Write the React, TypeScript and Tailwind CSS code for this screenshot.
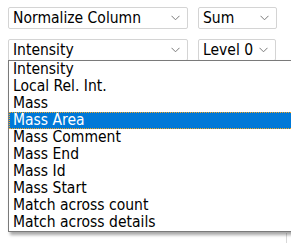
import React from "react";

const font = {
  fontFamily: '"DejaVu Sans Condensed", "DejaVu Sans", Verdana, sans-serif',
};

function Chevron() {
  return (
    <svg width="9" height="6" viewBox="0 0 9 6" className="shrink-0">
      <path d="M0.5 0.8 L4.5 4.8 L8.5 0.8" fill="none" stroke="#7a7a7a" strokeWidth="1" />
    </svg>
  );
}

function Select({ label, w }: { label: string; w: string }) {
  return (
    <div
      className={`${w} h-[22px] flex items-center justify-between pl-[4px] pr-[7px] bg-white border border-[#d4d4d4] rounded-[2px] text-[15.5px] leading-none text-black [font-stretch:condensed]`}
    >
      <span className="pt-[1px]">{label}</span>
      <Chevron />
    </div>
  );
}

const items = [
  "Intensity",
  "Local Rel. Int.",
  "Mass",
  "Mass Area",
  "Mass Comment",
  "Mass End",
  "Mass Id",
  "Mass Start",
  "Match across count",
  "Match across details",
];

export default function App() {
  return (
    <div className="w-[291px] h-[243px] overflow-hidden bg-white relative" style={font}>
      <div className="flex flex-col gap-[10px] pt-[7px] pl-[8px]">
        <div className="flex gap-[10px]">
          <Select label="Normalize Column" w="w-[180px]" />
          <Select label="Sum" w="w-[79px]" />
        </div>
        <div className="flex gap-[10px]">
          <Select label="Intensity" w="w-[180px]" />
          <Select label="Level 0" w="w-[78px]" />
        </div>
      </div>
      <div className="absolute left-[286px] top-[233px] w-px h-[10px] bg-[#d8d8d8]" />
      <div className="absolute left-[8px] top-[60px] w-[300px] bg-white border border-[#7a7a7a] shadow-[2px_3px_3px_rgba(0,0,0,0.35)] [font-stretch:condensed]">
        {items.map((it) => {
          const sel = it === "Mass Area";
          return (
            <div
              key={it}
              className={`h-[17px] flex items-center pl-[4px] text-[15.5px] leading-none whitespace-nowrap ${
                sel
                  ? "bg-[#0078d7] text-white outline outline-1 outline-dotted outline-[#f5a623] -outline-offset-1"
                  : "text-black"
              }`}
            >
              {it}
            </div>
          );
        })}
      </div>
    </div>
  );
}
